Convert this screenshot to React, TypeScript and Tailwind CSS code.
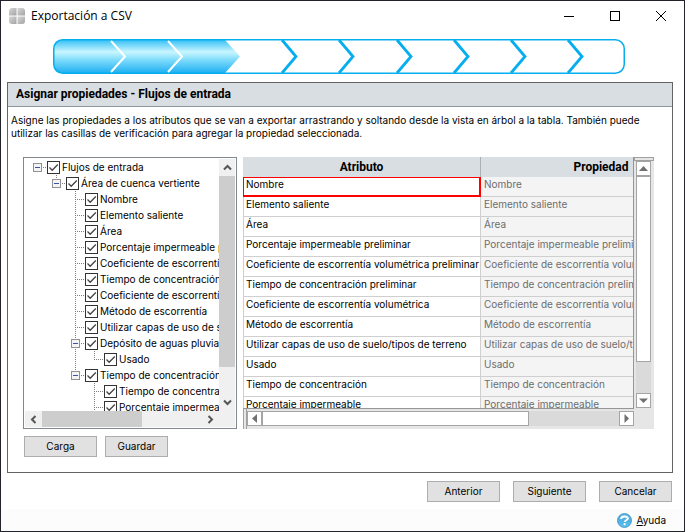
import React, { useState } from 'react';

type Guide = 'blank' | 'line' | 'tee' | 'elbow' | 'root';

interface TreeRow {
  id: string;
  label: string;
  guides: Guide[];
  expandable?: boolean;
}

const treeRows: TreeRow[] = [
  { id: 'flujos', label: 'Flujos de entrada', guides: ['root'], expandable: true },
  { id: 'cuenca', label: 'Área de cuenca vertiente', guides: ['blank', 'elbow'], expandable: true },
  { id: 'nombre', label: 'Nombre', guides: ['blank', 'blank', 'tee'] },
  { id: 'saliente', label: 'Elemento saliente', guides: ['blank', 'blank', 'tee'] },
  { id: 'area', label: 'Área', guides: ['blank', 'blank', 'tee'] },
  { id: 'imperm', label: 'Porcentaje impermeable preliminar', guides: ['blank', 'blank', 'tee'] },
  { id: 'coef-pre', label: 'Coeficiente de escorrentía volumétrica preliminar', guides: ['blank', 'blank', 'tee'] },
  { id: 'tiempo-pre', label: 'Tiempo de concentración preliminar', guides: ['blank', 'blank', 'tee'] },
  { id: 'coef', label: 'Coeficiente de escorrentía volumétrica', guides: ['blank', 'blank', 'tee'] },
  { id: 'metodo', label: 'Método de escorrentía', guides: ['blank', 'blank', 'tee'] },
  { id: 'capas', label: 'Utilizar capas de uso de suelo/tipos de terreno', guides: ['blank', 'blank', 'tee'] },
  { id: 'deposito', label: 'Depósito de aguas pluviales', guides: ['blank', 'blank', 'tee'], expandable: true },
  { id: 'usado', label: 'Usado', guides: ['blank', 'blank', 'line', 'elbow'] },
  { id: 'tiempo', label: 'Tiempo de concentración', guides: ['blank', 'blank', 'elbow'], expandable: true },
  { id: 'tiempo-sub', label: 'Tiempo de concentración', guides: ['blank', 'blank', 'blank', 'tee'] },
  { id: 'imperm-sub', label: 'Porcentaje impermeable', guides: ['blank', 'blank', 'blank', 'tee'] },
];

const attributes = [
  'Nombre',
  'Elemento saliente',
  'Área',
  'Porcentaje impermeable preliminar',
  'Coeficiente de escorrentía volumétrica preliminar',
  'Tiempo de concentración preliminar',
  'Coeficiente de escorrentía volumétrica',
  'Método de escorrentía',
  'Utilizar capas de uso de suelo/tipos de terreno',
  'Usado',
  'Tiempo de concentración',
  'Porcentaje impermeable',
];

const AppIcon = () => (
  <svg width="16" height="16" viewBox="0 0 16 16">
    <defs>
      <linearGradient id="tile" x1="0" y1="0" x2="1" y2="1">
        <stop offset="0" stopColor="#d8d8d8" />
        <stop offset="1" stopColor="#a2a2a2" />
      </linearGradient>
    </defs>
    <path d="M3 0H7.500V7.500H0V3Q0 0 3 0Z" fill="url(#tile)" />
    <path d="M8.500 0H13Q16 0 16 3V7.500H8.500Z" fill="url(#tile)" />
    <path d="M0 8.500H7.500V16H3Q0 16 0 13Z" fill="url(#tile)" />
    <path d="M8.500 8.500H16V13Q16 16 13 16H8.500Z" fill="url(#tile)" />
  </svg>
);

const HelpIcon = () => (
  <svg width="15" height="15" viewBox="0 0 15 15">
    <defs>
      <linearGradient id="help" x1="0" y1="0" x2="0" y2="1">
        <stop offset="0" stopColor="#5fb4e2" />
        <stop offset="0.5" stopColor="#4fb0e4" />
        <stop offset="1" stopColor="#58c4f2" />
      </linearGradient>
    </defs>
    <circle cx="7.5" cy="7.5" r="7" fill="url(#help)" stroke="#3d8fc0" strokeWidth="0.8" />
    <path d="M4 6C4.200 4.300 5.600 3.500 7.400 3.500c2 0 3.500.8 3.500 2.100 0 1.700-3.200 1.600-3.200 3.300" fill="none" stroke="#fff" strokeWidth="1.900" />
    <circle cx="7.600" cy="11.200" r="1.100" fill="#fff" />
  </svg>
);

const StepProgress = () => (
  <svg viewBox="0 0 572 35" className="block w-full" role="img" aria-label="Progreso">
    <defs>
      <linearGradient id="done" x1="0" y1="0" x2="0" y2="1">
        <stop offset="0" stopColor="#37c0f6" />
        <stop offset="0.36" stopColor="#c9f6ff" />
        <stop offset="0.6" stopColor="#7fdcfb" />
        <stop offset="1" stopColor="#1fb0f2" />
      </linearGradient>
    </defs>
    <path d="M9 1H172L187 17.500L172 34H9Q1 34 1 26V9Q1 1 9 1Z" fill="url(#done)" />
    <rect x="0.750" y="0.750" width="570.500" height="33.500" rx="9" fill="none" stroke="#06aeef" strokeWidth="1.500" />
    {[58, 115].map((x) => (
      <path key={x} d={`M${x} 2L${x + 14} 17.500L${x} 33`} fill="none" stroke="#fff" strokeWidth="2" />
    ))}
    {[229, 286, 344, 401, 458, 515].map((x) => (
      <path key={x} d={`M${x} 1L${x + 14} 17.500L${x} 34`} fill="none" stroke="#06aeef" strokeWidth="2.800" />
    ))}
  </svg>
);

const GuideCell: React.FC<{ kind: Guide; expandable?: boolean }> = ({ kind, expandable }) => (
  <svg width="19" height="16" viewBox="0 0 19 16" className="shrink-0" shapeRendering="crispEdges">
    {(kind === 'line' || kind === 'tee') && <path d="M9.500 0V16" stroke="#808080" strokeDasharray="1 1" />}
    {kind === 'elbow' && <path d="M9.500 0V9" stroke="#808080" strokeDasharray="1 1" />}
    {kind !== 'line' && kind !== 'blank' && <path d="M9 8.500H19" stroke="#808080" strokeDasharray="1 1" />}
    {expandable && (
      <>
        <rect x="5.500" y="4.500" width="8" height="8" fill="#f4f4f4" stroke="#919191" />
        <path d="M7 8.500H12" stroke="#3a54a4" />
      </>
    )}
  </svg>
);

const TreeItem: React.FC<{ row: TreeRow; checked: boolean; onToggle: () => void }> = ({ row, checked, onToggle }) => (
  <li className="flex h-4 items-center">
    {row.guides.map((kind, idx) => (
      <GuideCell key={idx} kind={kind} expandable={row.expandable && idx === row.guides.length - 1} />
    ))}
    <label className="flex items-center gap-0.5 whitespace-nowrap">
      <span className="relative block h-[13px] w-[13px] shrink-0">
        <input
          type="checkbox"
          checked={checked}
          onChange={onToggle}
          className="block h-[13px] w-[13px] appearance-none border border-[#333] bg-white"
        />
        {checked && (
          <svg viewBox="0 0 13 13" className="pointer-events-none absolute inset-0">
            <path d="M2.500 6.500L5.200 9.300L10.800 3.500" fill="none" stroke="#444" strokeWidth="1.300" />
          </svg>
        )}
      </span>
      <span>{row.label}</span>
    </label>
  </li>
);

const ThinArrow: React.FC<{ d: string }> = ({ d }) => (
  <svg width="9" height="9" viewBox="0 0 9 9">
    <path d={d} fill="none" stroke="#555" strokeWidth="2" />
  </svg>
);

const SolidArrow: React.FC<{ d: string }> = ({ d }) => (
  <svg width="9" height="9" viewBox="0 0 9 9">
    <path d={d} fill="#707070" />
  </svg>
);

const scrollButton = 'flex shrink-0 items-center justify-center';
const gridButton = 'flex h-[15px] w-[15px] shrink-0 items-center justify-center border border-[#a5a5a5] bg-white';
const pushButton = 'h-[21px] border border-[#adadad] bg-[#e1e1e1] text-center';

export default function App() {
  const [checked, setChecked] = useState<Record<string, boolean>>(() =>
    Object.fromEntries(treeRows.map((row) => [row.id, true]))
  );
  const [selected, setSelected] = useState(0);

  const toggle = (id: string) => setChecked((prev) => ({ ...prev, [id]: !prev[id] }));

  return (
    <div className="flex min-h-screen flex-col border border-[#23232b] bg-white font-[Inter,'Liberation_Sans',sans-serif] text-[10px] leading-[13px] text-black">
      {/* Title bar */}
      <header className="flex h-[29px] items-center pl-2">
        <AppIcon />
        <h1 className="ml-1.5 flex-1 font-['Open_Sans','Noto_Sans',sans-serif] text-[12px] leading-4">Exportación a CSV</h1>
        <button aria-label="Minimizar" className="flex h-full w-[46px] items-center justify-center">
          <svg width="10" height="10" shapeRendering="crispEdges"><path d="M0 5.500H10" stroke="#000" /></svg>
        </button>
        <button aria-label="Maximizar" className="flex h-full w-[46px] items-center justify-center">
          <svg width="10" height="10" shapeRendering="crispEdges"><rect x="0.500" y="0.500" width="9" height="9" fill="none" stroke="#000" /></svg>
        </button>
        <button aria-label="Cerrar" className="flex h-full w-[46px] items-center justify-center">
          <svg width="10" height="10"><path d="M0 0L10 10M10 0L0 10" stroke="#000" /></svg>
        </button>
      </header>

      <div className="mt-[9px] pl-[52px] pr-[59px]">
        <StepProgress />
      </div>

      <main className="ml-1.5 mr-[11px] mt-2 flex-1 border border-[#646464]">
        <h2 className="flex h-6 items-center border-b border-[#8f979d] bg-[#d9dee2] pl-2 font-[Roboto,'Liberation_Sans',sans-serif] text-[12px] font-bold">
          Asignar propiedades - Flujos de entrada
        </h2>
        <p className="pl-[3px] pt-[7px]">
          Asigne las propiedades a los atributos que se van a exportar arrastrando y soltando desde la vista en árbol a la tabla. También puede utilizar las casillas de verificación para agregar la propiedad seleccionada.
        </p>

        <div className="mt-[17px] flex pl-[15px] pr-[18px]">
          {/* Property tree */}
          <div className="h-[272px] w-[214px] shrink-0 border border-[#828790] p-px">
            <div className="flex h-[252px]">
              <ul className="min-w-0 flex-1 overflow-hidden pl-[3px]">
                {treeRows.map((row) => (
                  <TreeItem key={row.id} row={row} checked={checked[row.id]} onToggle={() => toggle(row.id)} />
                ))}
              </ul>
              <div className="flex w-4 flex-col bg-[#f0f0f0]">
                <button aria-label="Subir" className={`${scrollButton} h-[17px]`}><ThinArrow d="M1 6.500L4.500 3L8 6.500" /></button>
                <div className="h-[191px] bg-[#cdcdcd]" />
                <button aria-label="Bajar" className={`${scrollButton} mt-auto h-[17px]`}><ThinArrow d="M1 2.500L4.500 6L8 2.500" /></button>
              </div>
            </div>
            <div className="flex h-4 bg-[#f0f0f0] pr-4">
              <button aria-label="Izquierda" className={`${scrollButton} w-[17px]`}><ThinArrow d="M6.500 1L3 4.500L6.500 8" /></button>
              <div className="w-[100px] bg-[#cdcdcd]" />
              <button aria-label="Derecha" className={`${scrollButton} ml-auto w-[17px]`}><ThinArrow d="M2.500 1L6 4.500L2.500 8" /></button>
            </div>
          </div>

          {/* Attribute table */}
          <div className="ml-1.5 h-[272px] min-w-0 flex-1 bg-[#e6e6e6]">
            <div className="flex h-[251px]">
              <div className="min-w-0 flex-1 overflow-hidden border-r border-[#969696] bg-white">
                <table className="w-[478px] table-fixed border-separate border-spacing-0">
                  <colgroup>
                    <col className="w-[238px]" />
                    <col className="w-[240px]" />
                  </colgroup>
                  <thead>
                    <tr className="h-5 bg-[#d9dee2] font-[Roboto,'Liberation_Sans',sans-serif] text-[12px]">
                      <th className="border-r border-[#aab0b4] p-0">Atributo</th>
                      <th className="p-0">Propiedad</th>
                    </tr>
                  </thead>
                  <tbody>
                    {attributes.map((name, idx) => (
                      <tr key={name} className="h-5 align-top" onClick={() => setSelected(idx)}>
                        <td
                          className={
                            idx === selected
                              ? 'border border-r-2 border-b-2 border-[#f00] p-0 pl-0.5 whitespace-nowrap'
                              : 'border-x border-b border-[#cfcfcf] p-0 pl-0.5 pt-px whitespace-nowrap'
                          }
                        >
                          {name}
                        </td>
                        <td className="border-b border-[#cfcfcf] bg-[#f4f4f4] p-0 pl-[3px] pt-px whitespace-nowrap text-[#6d6d6d]">{name}</td>
                      </tr>
                    ))}
                  </tbody>
                </table>
              </div>
              <div className="flex w-5 flex-col">
                <div className="h-1 shrink-0 border border-[#a0a0a0]" />
                <div className="ml-0.5 flex w-[15px] flex-1 flex-col bg-[#dadada]">
                  <button aria-label="Subir tabla" className={gridButton}><SolidArrow d="M0 7L4.500 2L9 7Z" /></button>
                  <div className="h-[186px] border border-[#a5a5a5] bg-white" />
                  <button aria-label="Bajar tabla" className={`${gridButton} mt-auto`}><SolidArrow d="M0 2.500L4.500 7L9 2.500Z" /></button>
                </div>
              </div>
            </div>
            <div className="mr-5 flex h-[21px] border-t border-[#969696]">
              <div className="w-1 border-x border-[#a0a0a0]" />
              <div className="mt-0.5 flex h-[15px] flex-1 bg-[#dadada]">
                <button aria-label="Tabla a la izquierda" className={gridButton}><SolidArrow d="M7 0L2 4.500L7 9Z" /></button>
                <div className="w-[267px] border border-[#a5a5a5] bg-white" />
                <button aria-label="Tabla a la derecha" className={`${gridButton} ml-auto`}><SolidArrow d="M2.500 0L7 4.500L2.500 9Z" /></button>
              </div>
            </div>
          </div>
        </div>

        <div className="mb-[15px] mt-[7px] flex gap-2 pl-4">
          <button className={`${pushButton} w-[73px]`}>Carga</button>
          <button className={`${pushButton} w-[63px]`}>Guardar</button>
        </div>
      </main>

      <div className="mr-3 mt-2 flex justify-end gap-[13px]">
        <button className={`${pushButton} w-[73px]`}>Anterior</button>
        <button className={`${pushButton} w-[73px]`}>Siguiente</button>
        <button className={`${pushButton} w-[73px]`}>Cancelar</button>
      </div>

      <footer className="mt-[7px] flex h-[22px] items-center justify-end bg-[#fcfcfc] pr-[18px]">
        <a href="#ayuda" className="flex items-center gap-1">
          <HelpIcon />
          <span><span className="underline">A</span>yuda</span>
        </a>
      </footer>
    </div>
  );
}
